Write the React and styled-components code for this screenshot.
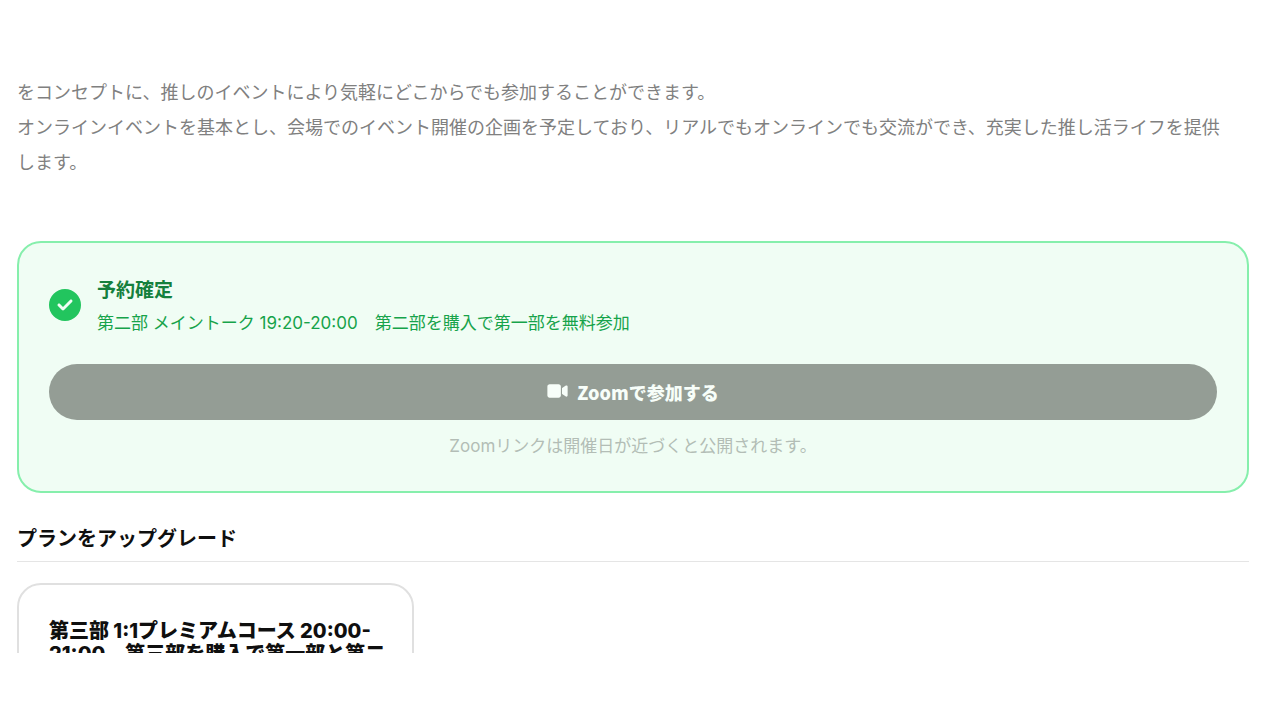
import React from 'react';
import styled, { createGlobalStyle } from 'styled-components';
import { FaCircleCheck, FaVideo } from 'react-icons/fa6';

const GlobalStyle = createGlobalStyle`
  * {
    box-sizing: border-box;
  }

  body {
    margin: 0;
    background-color: #fff;
    color: #0f0f0f;
    font-family: Inter, 'Noto Sans CJK JP', sans-serif;
  }
`;

const Page = styled.div`
  display: flex;
  flex-direction: column;
  height: 100vh;
  padding: 75px 31px 67px 17px;
`;

const Content = styled.main`
  flex: 1;
  min-height: 0;
  overflow: hidden;
`;

const Description = styled.p`
  margin: 0 0 61px;
  color: #808080;
  font-size: 18px;
  line-height: 35px;
`;

const BookingCard = styled.section`
  padding: 30px;
  margin-bottom: 32px;
  background-color: #f0fdf4;
  border: 2px solid #86efac;
  border-radius: 24px;
`;

const BookingHeader = styled.div`
  display: flex;
  align-items: center;
  gap: 16px;
  margin-bottom: 27px;
`;

const CheckIcon = styled(FaCircleCheck)`
  flex-shrink: 0;
  width: 32px;
  height: 32px;
  color: #22c55e;
`;

const BookingTitle = styled.h3`
  margin: 0;
  color: #15803d;
  font-size: 19px;
  font-weight: 700;
  line-height: 36px;
`;

const BookingPlan = styled.p`
  margin: 0;
  color: #16a34a;
  font-size: 17px;
  line-height: 28px;
`;

const ZoomButton = styled.button`
  display: flex;
  align-items: center;
  justify-content: center;
  gap: 9px;
  width: 100%;
  height: 56px;
  padding: 0 32px;
  border: none;
  border-radius: 28px;
  background-color: #949d95;
  color: #f7fef9;
  font-family: 'Noto Sans CJK JP', sans-serif;
  font-size: 18px;
  font-weight: 800;
  cursor: not-allowed;

  svg {
    width: 21px;
    height: 18px;
    margin-bottom: 2px;
  }
`;

const ZoomNote = styled.p`
  margin: 12px 0 0;
  color: #b3bdb6;
  font-size: 17px;
  line-height: 29px;
  text-align: center;
`;

const SectionTitle = styled.h2`
  margin: 0 0 21px;
  padding-bottom: 7px;
  border-bottom: 1px solid #e5e5e5;
  font-size: 20px;
  font-weight: 700;
  line-height: 29px;
`;

const PlanGrid = styled.div`
  display: grid;
  grid-template-columns: repeat(3, 1fr);
  gap: 21px;
`;

const PlanCard = styled.article`
  padding: 35px 24px 35px 30px;
  border: 2px solid #e0e0e0;
  border-radius: 24px;
`;

const PlanName = styled.h3`
  margin: 0;
  font-size: 20px;
  font-weight: 800;
  line-height: 23px;
`;

const App = () => {
  return (
    <>
      <GlobalStyle />
      <Page>
        <Content>
          <Description>
            をコンセプトに、推しのイベントにより気軽にどこからでも参加することができます。
            <br />
            オンラインイベントを基本とし、会場でのイベント開催の企画を予定しており、リアルでもオンラインでも交流ができ、充実した推し活ライフを提供
            <br />
            します。
          </Description>

          <BookingCard>
            <BookingHeader>
              <CheckIcon />
              <div>
                <BookingTitle>予約確定</BookingTitle>
                <BookingPlan>第二部 メイントーク 19:20-20:00　第二部を購入で第一部を無料参加</BookingPlan>
              </div>
            </BookingHeader>
            <ZoomButton type="button" disabled>
              <FaVideo />
              Zoomで参加する
            </ZoomButton>
            <ZoomNote>Zoomリンクは開催日が近づくと公開されます。</ZoomNote>
          </BookingCard>

          <SectionTitle>プランをアップグレード</SectionTitle>
          <PlanGrid>
            <PlanCard>
              <PlanName>第三部 1:1プレミアムコース 20:00-21:00　第三部を購入で第一部と第二部を無料参加</PlanName>
            </PlanCard>
          </PlanGrid>
        </Content>
      </Page>
    </>
  );
};

export default App;
